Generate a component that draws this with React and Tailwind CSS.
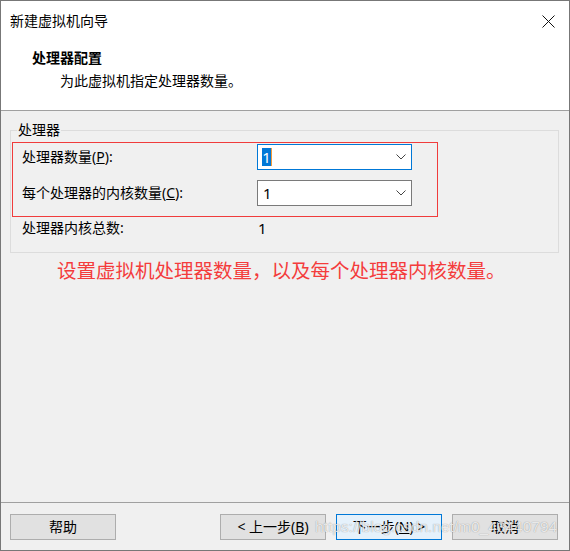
import React from "react";

const font = { fontFamily: '"Noto Sans", "Noto Sans CJK SC", sans-serif' };

function Chevron() {
  return (
    <svg width="10" height="6" viewBox="0 0 10 6" className="shrink-0">
      <polyline points="0.5,0.5 5,5 9.5,0.5" fill="none" stroke="#444" strokeWidth="1" />
    </svg>
  );
}

function Combo({ focused }) {
  return (
    <div
      className={
        "h-[26px] w-[155px] bg-white border flex items-center justify-between pl-[4px] pr-[5px] " +
        (focused ? "border-[#0078d7]" : "border-[#7a7a7a]")
      }
    >
      {focused ? (
        <span className="h-[18px] w-[10px] bg-[#0078d7] text-white leading-[18px] text-[15px] border-r border-r-[#f39b3a] flex justify-center">
          1
        </span>
      ) : (
        <span className="leading-[18px] text-[15px] text-black pl-[1px]">1</span>
      )}
      <Chevron />
    </div>
  );
}

function Btn({ children, primary }) {
  return (
    <button
      className={
        "h-[26px] w-[106px] border text-[14px] leading-[20px] text-black flex items-center justify-center " +
        (primary ? "bg-[#e5f1fb] border-[#0078d7]" : "bg-[#e1e1e1] border-[#adadad]")
      }
    >
      {children}
    </button>
  );
}

export default function App() {
  return (
    <div
      className="w-[570px] h-[551px] border border-[#777777] bg-[#f0f0f0] flex flex-col text-black"
      style={font}
    >
      {/* 标题 + 头部 */}
      <div className="h-[110px] bg-white border-b border-[#a0a0a0] shrink-0">
        <div className="flex items-center justify-between pt-[10px] pl-[9px] pr-[14px]">
          <span className="text-[14px] leading-[20px]">新建虚拟机向导</span>
          <svg width="13" height="13" viewBox="0 0 13 13">
            <path d="M0.5 0.5 L12.5 12.5 M12.5 0.5 L0.5 12.5" stroke="#111" strokeWidth="1" />
          </svg>
        </div>
        <div className="mt-[17px] pl-[31px] text-[14px] leading-[20px] font-bold">处理器配置</div>
        <div className="mt-[3px] pl-[59px] text-[14px] leading-[20px]">为此虚拟机指定处理器数量。</div>
      </div>

      {/* 内容 */}
      <div className="flex-1 flex flex-col">
        <fieldset className="mt-[9px] ml-[9px] mr-[10px] border border-[#dcdcdc] pb-[13px]">
          <legend className="ml-[6px] px-[1px] text-[14px] leading-[20px]">处理器</legend>
          <div className="mt-[2px] ml-[1px] w-[426px] border border-[#f03c3c] pt-[1px] pb-[10px] pl-[9px] flex flex-col gap-[10px]">
            <div className="grid grid-cols-[235px_155px] items-center h-[26px]">
              <span className="text-[14px] leading-[20px]">
                处理器数量(<span className="underline">P</span>):
              </span>
              <Combo focused />
            </div>
            <div className="grid grid-cols-[235px_155px] items-center h-[26px]">
              <span className="text-[14px] leading-[20px]">
                每个处理器的内核数量(<span className="underline">C</span>):
              </span>
              <Combo />
            </div>
          </div>
          <div className="grid grid-cols-[236px_1fr] items-center h-[22px] pl-[11px]">
            <span className="text-[14px] leading-[20px]">处理器内核总数:</span>
            <span className="text-[15px] leading-[20px]">1</span>
          </div>
        </fieldset>

        <div className="mt-[5px] pl-[56px] text-[19.5px] leading-[26px] text-[#f43c3c]">
          设置虚拟机处理器数量，以及每个处理器内核数量。
        </div>
      </div>

      {/* 底部按钮 */}
      <div className="relative h-[48px] shrink-0 border-t border-[#a0a0a0] pt-[11px] pl-[9px] pr-[11px] flex">
        <Btn>帮助</Btn>
        <div className="ml-auto flex gap-[10px]">
          <Btn>
            &lt; 上一步(<span className="underline">B</span>)
          </Btn>
          <Btn primary>
            下一步(<span className="underline">N</span>) &gt;
          </Btn>
          <Btn>取消</Btn>
        </div>
        <span
          className="absolute left-[314px] top-[13px] text-[15.5px] leading-[22px] text-white/80 pointer-events-none [text-shadow:0_0_1px_rgba(0,0,0,0.45)]"
          style={{ fontFamily: '"Liberation Sans", Arial, sans-serif' }}
        >
          https://blog.csdn.net/m0_43440794
        </span>
      </div>
    </div>
  );
}
